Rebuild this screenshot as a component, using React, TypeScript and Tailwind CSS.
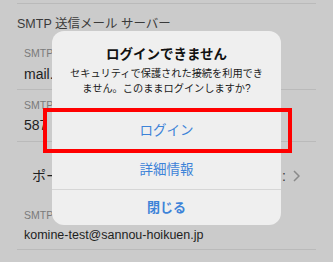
import React from "react";

const F = "font-[family-name:Liberation_Sans,Noto_Sans_CJK_JP,sans-serif]";

export default function App() {
  return (
    <div className={`relative w-[333px] h-[262px] overflow-hidden bg-[#cbcbcb] ${F}`}>
      {/* background list */}
      <div className="flex flex-col pl-[17px] pr-[17px] pt-[3px]">
        <div className="h-px bg-[#bababa]" />
        <div className="h-[42px] flex items-center text-[12.5px] text-[#3a3a3a] leading-none pb-[1px]">
          SMTP 送信メール サーバー
        </div>
        <div className="flex flex-col pl-[7px] h-[43px]">
          <div className="text-[10.5px] text-[#7a7a7a] leading-[12px] mt-[1px]">SMTP</div>
          <div className="text-[14px] text-[#1e1e1e] leading-[18px] mt-[6px]">mail.sannou-hoikuen.jp</div>
        </div>
        <div className="h-px bg-[#bababa]" />
        <div className="flex flex-col pl-[7px] h-[51px]">
          <div className="text-[10.5px] text-[#7a7a7a] leading-[12px] mt-[9px]">SMTP</div>
          <div className="text-[14px] text-[#1e1e1e] leading-[18px] mt-[5px]">587</div>
        </div>
        <div className="h-px bg-[#bababa]" />
        <div className="flex items-center justify-between h-[66px] pl-[15px] pr-[16px] pt-[2px]">
          <span className="text-[14px] text-[#1e1e1e]">ポート番号</span>
          <span className="flex items-center gap-[7px] text-[14px] text-[#3a3a3a]">
            <span>:</span>
            <svg width="7" height="12" viewBox="0 0 7 12" fill="none" stroke="#8a8a8a" strokeWidth="1.5">
              <path d="M1 1l5 5-5 5" />
            </svg>
          </span>
        </div>
        <div className="flex flex-col pl-[7px] h-[41px]">
          <div className="text-[10.5px] text-[#7a7a7a] leading-[12px] mt-[1px]">SMTP</div>
          <div className="text-[12.5px] text-[#1e1e1e] leading-[18px] mt-[5px]">komine-test@sannou-hoikuen.jp</div>
        </div>
        <div className="h-px bg-[#bababa]" />
      </div>

      {/* alert dialog */}
      <div className="absolute left-[52px] top-[31px] w-[229px] h-[194px] rounded-[12px] bg-[#efefef] flex flex-col overflow-hidden">
        <div className="h-[80px] flex flex-col items-center pt-[15px]">
          <div className="text-[13.5px] font-bold text-[#111] leading-[18px] mb-[2px]">ログインできません</div>
          <div className="text-[10.2px] text-[#1a1a1a] leading-[15px] text-center">
            <div>セキュリティで保護された接続を利用でき</div>
            <div>ません。このままログインしますか?</div>
          </div>
        </div>
        <div className="h-px bg-[#d6d6d6]" />
        <div className="h-[38px] flex items-center justify-center text-[13.5px] text-[#3d83d8]">ログイン</div>
        <div className="h-px bg-[#d6d6d6]" />
        <div className="h-[38px] flex items-center justify-center text-[13.5px] text-[#3d83d8]">詳細情報</div>
        <div className="h-px bg-[#d6d6d6]" />
        <div className="flex-1 flex items-center justify-center text-[13px] font-bold text-[#3d83d8]">閉じる</div>
      </div>

      {/* red highlight */}
      <div className="absolute left-[43px] top-[108px] w-[249px] h-[45px] border-4 border-[#ff0000]" />
    </div>
  );
}
